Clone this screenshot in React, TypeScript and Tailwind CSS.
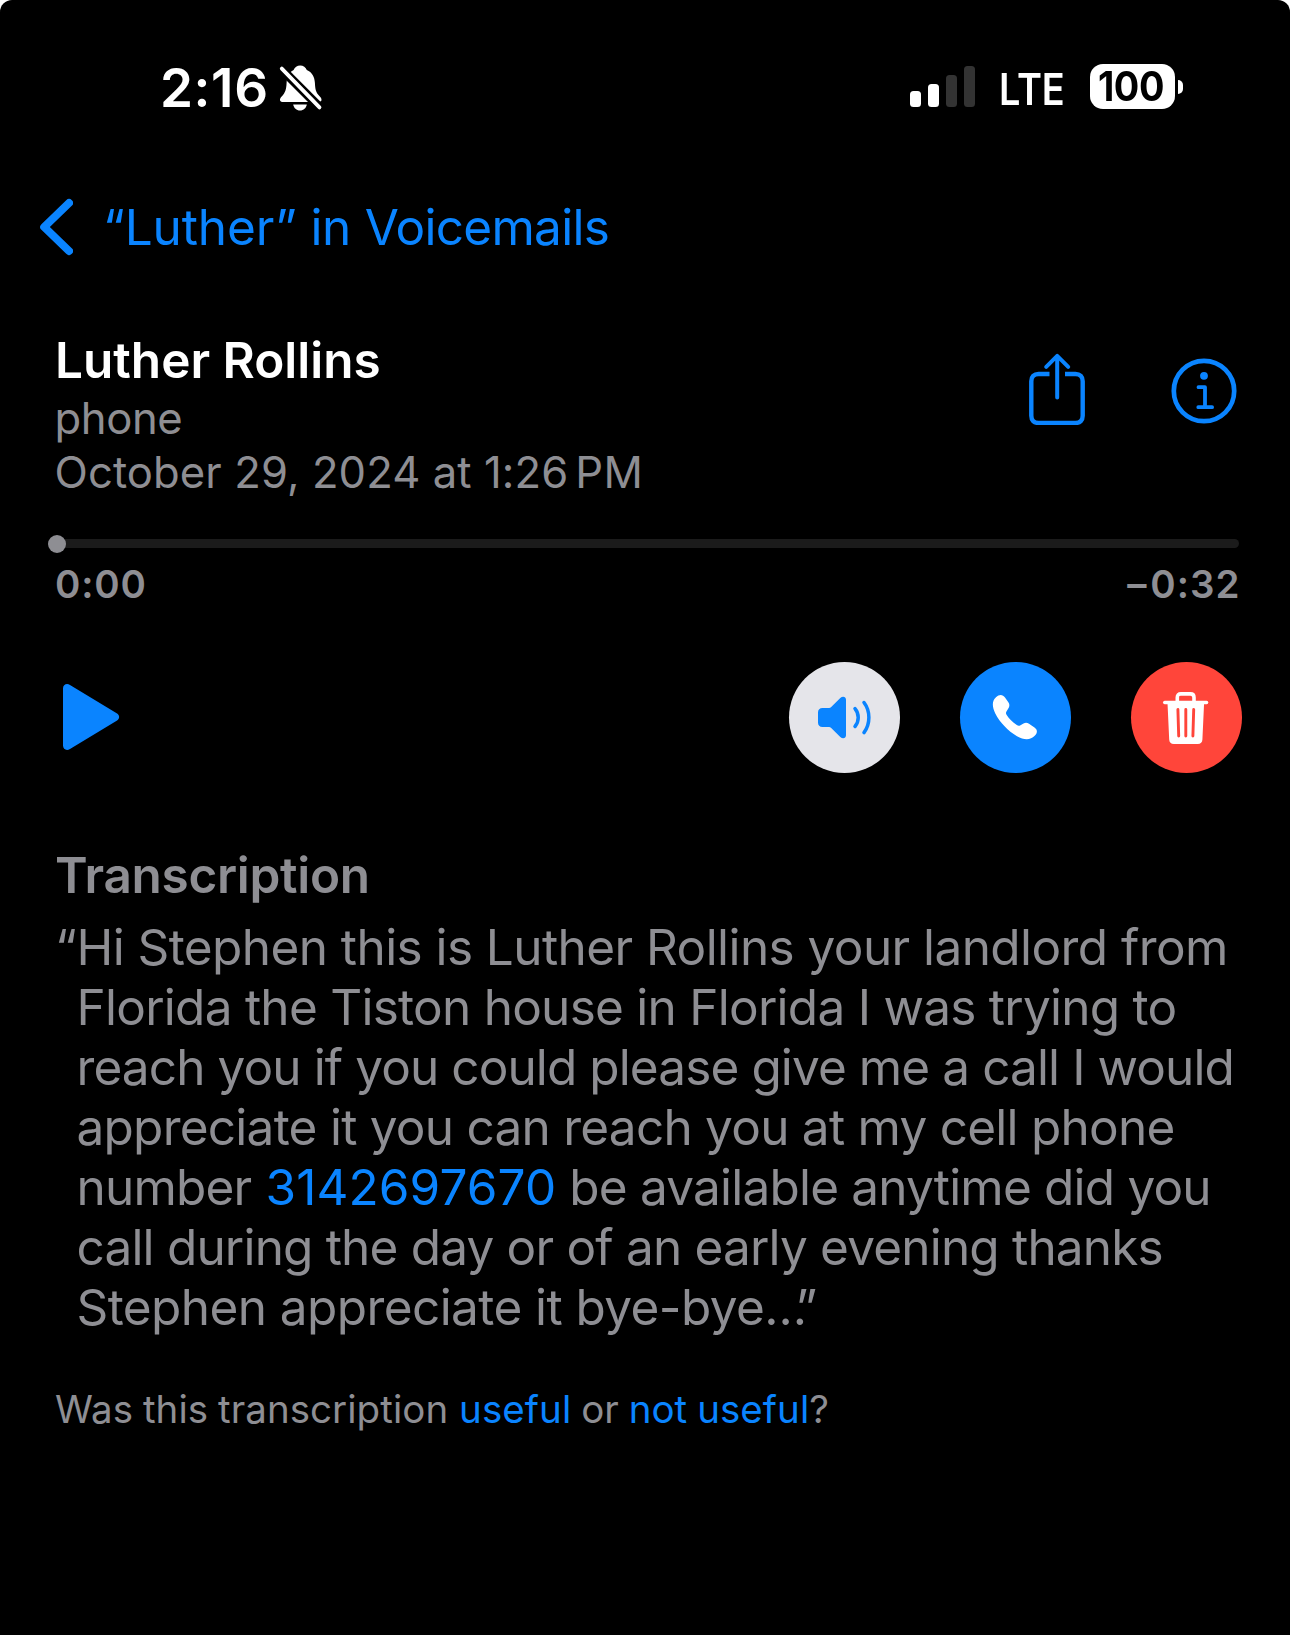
import type { ReactNode } from "react";

function BellOff() {
  return (
    <svg width="44" height="48" viewBox="0 0 44 48" className="ml-[10px] shrink-0">
      <defs>
        <mask id="bell-cut">
          <rect width="44" height="48" fill="#fff" />
          <path d="M0.6 4.4 41 44.8" stroke="#000" strokeWidth="9" transform="translate(0.6 -0.6)" />
        </mask>
      </defs>
      <g fill="#fff">
        <path
          mask="url(#bell-cut)"
          d="M21.2 1.5c3 0 5.700 1.800 6.600 4.500 5.200 2.100 7.800 6.900 8.100 12.800.3 6.600.9 9.600 4.700 13.500 1.400 1.500 1.900 2.300 1.900 3.500 0 1.300-1 2.200-2.600 2.200H3.300C1.800 38 1 37.100 1 35.800c0-1.300.6-2.300 2.200-3.900 3-3.200 4.100-6.200 4.400-13.100.3-5.900 2.400-10.700 7-12.800.9-2.700 3.600-4.500 6.600-4.500Z"
        />
        <path d="M14.200 40.500h13.600c-.5 3.400-3.300 6-6.800 6s-6.300-2.600-6.800-6Z" />
      </g>
      <path d="M2.800 4.600 40.500 43.400" stroke="#fff" strokeWidth="3.800" strokeLinecap="round" />
    </svg>
  );
}

function StatusBar() {
  return (
    <div className="flex h-[60px] items-center pl-[160px] pr-[107px] text-white">
      <span className="text-[53px] leading-[60px] font-semibold tracking-[0.6px]">2:16</span>
      <BellOff />
      <div className="ml-auto flex items-center">
        <div className="mb-[3px] flex h-[41px] items-end gap-[7px]">
          <span className="h-4 w-[11px] rounded-[3.500px] bg-white" />
          <span className="h-[23px] w-[11px] rounded-[3.500px] bg-white" />
          <span className="h-8 w-[11px] rounded-[3.500px] bg-[#333333]" />
          <span className="h-[41px] w-[11px] rounded-[3.500px] bg-[#333333]" />
        </div>
        <span className="mt-px ml-[24px] w-[66px] origin-left scale-x-[0.86] text-[44px] leading-[58px] font-[560]">LTE</span>
        <div className="mb-[3px] ml-[25px] flex items-center gap-[3px]">
          <div className="h-[45px] w-[85px] rounded-[13px] bg-white pl-[7.500px] text-[40.500px] leading-[46px] font-bold text-black">
            <span className="inline-block origin-left scale-x-[0.935] tracking-[-0.500px]">100</span>
          </div>
          <span className="h-[14px] w-[5px] rounded-r-full bg-white" />
        </div>
      </div>
    </div>
  );
}

function BackLink() {
  return (
    <a className="mt-[79px] flex h-[60px] items-center pl-[39px] text-[49.500px] leading-[60px] whitespace-pre text-[#0a84ff]">
      <svg width="34" height="58" viewBox="0 0 34 58" fill="none" className="mr-[30px]">
        <path d="M30 5 5.200 29 30 53" stroke="#0a84ff" strokeWidth="8" strokeLinecap="round" strokeLinejoin="round" />
      </svg>
      <span>
        <span className="tracking-[-0.100px]">“Luther”</span>
        <span className="tracking-[-0.300px]"> in </span>
        <span className="tracking-[-0.730px]">Voicemails</span>
      </span>
    </a>
  );
}

function ShareIcon() {
  return (
    <svg width="58" height="74" viewBox="0 0 58 74" fill="none" stroke="#0a84ff" strokeWidth="4.400">
      <path d="M21.500 23H10.500c-4.500 0-7.200 2.700-7.200 7.200v34.600c0 4.500 2.700 7.200 7.200 7.200h37c4.500 0 7.200-2.700 7.200-7.200V30.200c0-4.500-2.700-7.200-7.200-7.200H37" />
      <path d="M29.200 5.500V46.500M18.200 15.800 29.200 4.800l11 11" strokeWidth="4" strokeLinecap="round" strokeLinejoin="round" />
    </svg>
  );
}

function InfoIcon() {
  return (
    <svg width="66" height="66" viewBox="0 0 66 66" fill="none" stroke="#0a84ff">
      <circle cx="33" cy="33" r="30.200" strokeWidth="4.700" />
      <circle cx="33" cy="17.800" r="3.900" fill="#0a84ff" stroke="none" />
      <path d="M27.500 29.200H34v20M27.300 49.200h13.800" strokeWidth="3.800" strokeLinecap="round" strokeLinejoin="round" />
    </svg>
  );
}

function Caller() {
  return (
    <section className="mt-[73px] flex justify-between pr-[53.500px] pl-[55px]">
      <div className="text-[43.600px] leading-[54px] text-[#8e8e93]">
        <h1 className="mb-[2px] text-[49.500px] leading-[60px] font-semibold text-white">Luther Rollins</h1>
        <p className="-ml-[0.500px] tracking-[-0.400px]">phone</p>
        <p className="-ml-[0.500px] tracking-[0.090px]">
          October 29, 2024 at 1:26<span className="ml-[7px] tracking-[0.400px]">PM</span>
        </p>
      </div>
      <div className="flex items-start gap-[85px] pt-[21px]">
        <ShareIcon />
        <span className="pt-[6.700px]">
          <InfoIcon />
        </span>
      </div>
    </section>
  );
}

function Scrubber() {
  return (
    <section className="mt-[35px] pr-[51px] pl-[48px]">
      <div className="flex h-[18px] items-center">
        <span className="z-10 size-[18px] shrink-0 rounded-full bg-[#8e8e93]" />
        <span className="-mt-px -ml-1 h-[9px] grow rounded-r-full bg-[#1b1b1b]" />
      </div>
      <div className="mt-[7px] -mr-[1.500px] flex justify-between pl-[7px] text-[38.500px] leading-[48px] font-semibold tracking-[0.800px] text-[#8e8e93]">
        <span>0:00</span>
        <span>
          <span className="mr-[3px]">–</span>
          <span className="tracking-[1px]">0:32</span>
        </span>
      </div>
    </section>
  );
}

function RoundButton({ className, children }: { className: string; children: ReactNode }) {
  return (
    <button className={`size-[111px] rounded-full ${className}`}>
      <svg width="111" height="111" viewBox="0 0 111 111" fill="none">
        {children}
      </svg>
    </button>
  );
}

function Controls() {
  return (
    <section className="mt-[54px] flex h-[111px] items-center pr-[48px] pl-[62px]">
      <svg width="60" height="70" viewBox="0 0 60 70" fill="#0a84ff" className="mb-px">
        <path d="M1 6.500C1 2.600 4.600.8 8 2.900L54.700 31.200c3.300 2 3.300 5.400 0 7.500L8 67c-3.400 2.100-7 .4-7-3.500Z" />
      </svg>
      <div className="ml-auto flex gap-[60px]">
        <RoundButton className="bg-[#e5e5ea]">
          <path
            fill="#0a84ff"
            d="M33.500 46H39.500c1.200 0 1.900-.3 2.700-1.100L51.300 36c2.200-2.100 5.700-1.500 5.700 1.700v35.600c0 3.200-3.400 3.900-5.700 1.700L42.200 66c-.8-.8-1.500-1.100-2.700-1.100H33.500c-2.800 0-4.500-1.600-4.500-4.500V50.500c0-2.900 1.700-4.500 4.500-4.500Z"
          />
          <path
            d="M66 46.600c4.300 5 4.300 12.900 0 17.900M75 40.500c6.500 8.600 6.500 21.500 0 30.100"
            stroke="#0a84ff"
            strokeWidth="3.500"
            strokeLinecap="round"
          />
        </RoundButton>
        <RoundButton className="bg-[#0a84ff]">
          <path
            fill="#fff"
            d="M36 35.300C39.500 32 42.800 32.500 45 35.600L48.500 40.600C49.800 42.500 49.600 44.600 48.300 46.600L46.600 49.300C45.700 50.700 45.800 51.600 46.700 53 49 56.500 52.500 60.200 56.800 63.100 58.200 64 59.100 64.100 60.500 63.200L63.500 61.500C65.500 60.400 67.200 60.600 69 61.800L74.500 65.500C77.600 67.700 77.700 70.600 74.700 73.800 70.500 78.300 64 78.300 57 74.200 48 69 39.500 60 35.300 51.500 32 44.500 31.800 39.300 36 35.300Z"
          />
        </RoundButton>
        <RoundButton className="bg-[#ff453a]">
          <path
            d="M46.300 40v-4.500c0-2.300 1.300-3.600 3.600-3.600h9.500c2.300 0 3.600 1.300 3.600 3.600V40"
            stroke="#fff"
            strokeWidth="3.600"
          />
          <path d="M33.700 40.500h41.900" stroke="#fff" strokeWidth="3.400" strokeLinecap="round" />
          <path
            fill="#fff"
            d="M36.500 41h36.600l-1.700 36.500c-.1 2.900-1.800 4.500-4.600 4.500h-24c-2.800 0-4.500-1.600-4.600-4.500Z"
          />
          <path
            d="m46.900 47.500.8 26.500M54.800 47.500V74M62.700 47.500 61.900 74"
            stroke="#ff453a"
            strokeWidth="2.900"
            strokeLinecap="round"
          />
        </RoundButton>
      </div>
    </section>
  );
}

function Transcription() {
  return (
    <section className="mt-[72px] pl-[55px] text-[49.500px] leading-[60px] text-[#8e8e93]">
      <h2 className="font-semibold tracking-[-0.300px]">Transcription</h2>
      <div className="mt-[12px] flex whitespace-pre">
        <span className="w-[21.500px]">“</span>
        <div>
          <p className="tracking-[-0.570px]">Hi Stephen this is Luther Rollins your landlord from</p>
          <p className="tracking-[-0.740px]">Florida the Tiston house in Florida I was trying to</p>
          <p className="tracking-[-0.900px]">reach you if you could please give me a call I would</p>
          <p className="tracking-[-0.750px]">appreciate it you can reach you at my cell phone</p>
          <p className="tracking-[-0.800px]">
            number <a className="ml-px tracking-[0.100px] text-[#0a84ff]">3142697670</a> be available anytime did you
          </p>
          <p className="tracking-[-0.810px]">call during the day or of an early evening thanks</p>
          <p className="tracking-[-0.580px]">
            Stephen appreciate it bye-bye<span className="tracking-[-11.500px]">…</span>”
          </p>
        </div>
      </div>
      <p className="mt-[49px] text-[38.500px] leading-[46px] tracking-[0.050px] [word-spacing:-1px]">
        Was this transcription <a className="ml-px text-[#0a84ff]">useful</a> or <a className="text-[#0a84ff]">not useful</a>?
      </p>
    </section>
  );
}

export default function App() {
  return (
    <div className="bg-white">
      <main className="h-[1635px] w-[1290px] overflow-hidden rounded-t-[12px] bg-black pt-[58px] font-['Inter',sans-serif]">
        <StatusBar />
        <BackLink />
        <Caller />
        <Scrubber />
        <Controls />
        <Transcription />
      </main>
    </div>
  );
}
